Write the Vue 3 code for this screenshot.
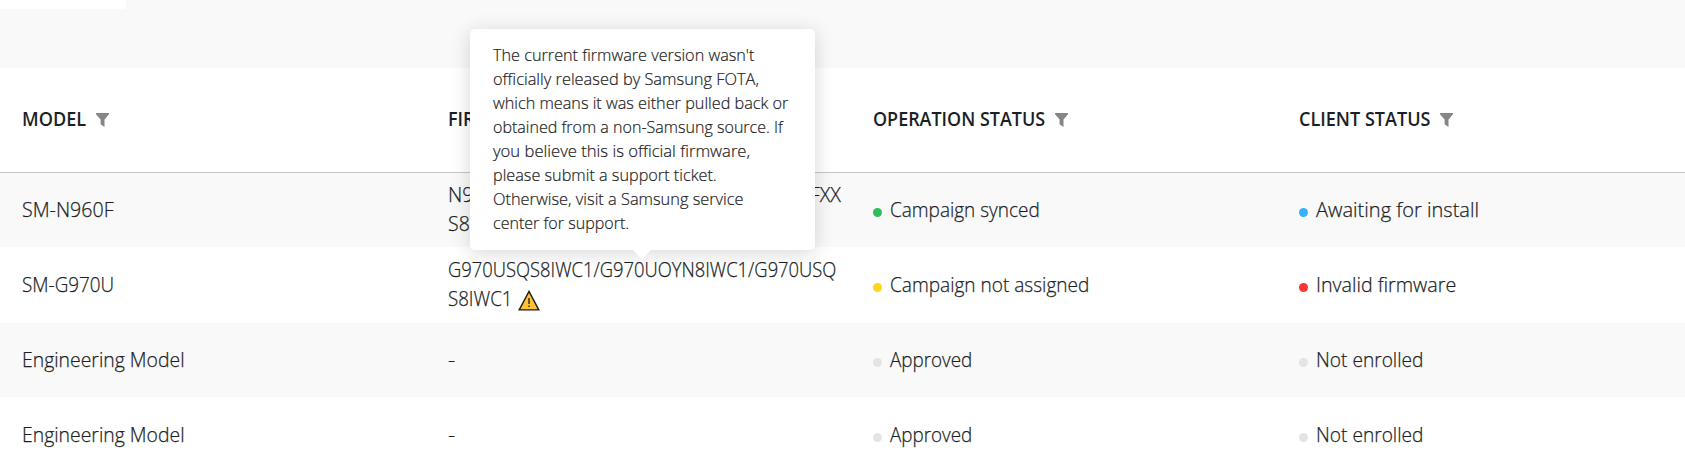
<script setup>
const columns = [
  { label: 'MODEL', width: 64 },
  { label: 'FIRMWARE VERSION', width: 174 },
  { label: 'OPERATION STATUS', width: 172 },
  { label: 'CLIENT STATUS', width: 131.5 },
]

const approved = { text: 'Approved', width: 82.5, tone: 'grey' }
const notEnrolled = { text: 'Not enrolled', width: 107.5, tone: 'grey' }
const engineering = { text: 'Engineering Model', width: 162.5 }
const none = [{ text: '-', width: 7.5 }]

const rows = [
  {
    model: { text: 'SM-N960F', width: 91.5 },
    firmware: [
      { text: 'N960FXXS8FVE1/N960FOXM8FVE1/N960FXX', width: 393 },
      { text: 'S8FVE1', width: 65 },
    ],
    statuses: [
      { text: 'Campaign synced', width: 150, tone: 'green' },
      { text: 'Awaiting for install', width: 163, tone: 'blue' },
    ],
  },
  {
    model: { text: 'SM-G970U', width: 92.5 },
    firmware: [
      { text: 'G970USQS8IWC1/G970UOYN8IWC1/G970USQ', width: 388.5 },
      { text: 'S8IWC1', width: 65 },
    ],
    warning: true,
    statuses: [
      { text: 'Campaign not assigned', width: 199.5, tone: 'yellow' },
      { text: 'Invalid firmware', width: 140.5, tone: 'red' },
    ],
  },
  { model: engineering, firmware: none, statuses: [approved, notEnrolled] },
  { model: engineering, firmware: none, statuses: [approved, notEnrolled] },
]

const tooltip = [
  { text: "The current firmware version wasn't", width: 261.5 },
  { text: 'officially released by Samsung FOTA,', width: 266 },
  { text: 'which means it was either pulled back or', width: 295 },
  { text: 'obtained from a non-Samsung source. If', width: 290 },
  { text: 'you believe this is official firmware,', width: 257 },
  { text: 'please submit a support ticket.', width: 223.5 },
  { text: 'Otherwise, visit a Samsung service', width: 251 },
  { text: 'center for support.', width: 136 },
]

// Condenses a line horizontally so that it takes its intended width.
const vFit = (el, { value }) => {
  const natural = el.offsetWidth
  el.style.transform = `scaleX(${value / natural})`
  el.style.marginRight = `${value - natural}px`
}
</script>

<template>
  <div class="page">
    <div class="toolbar"><div class="tab"></div></div>

    <div class="grid head">
      <div v-for="c in columns" :key="c.label" class="cell">
        <span v-fit="c.width" class="text">{{ c.label }}</span>
        <svg class="filter" width="13" height="14" viewBox="0 0 13 14">
          <path d="M0 0H13V1.3L8.5 6.4V14L4.6 11.2V6.4L0 1.3Z" fill="#868686" />
        </svg>
      </div>
    </div>

    <div v-for="(r, i) in rows" :key="i" class="grid row">
      <div class="cell"><span v-fit="r.model.width" class="text">{{ r.model.text }}</span></div>
      <div class="cell firmware">
        <div v-for="(line, n) in r.firmware" :key="n" class="line">
          <span v-fit="line.width" class="text">{{ line.text }}</span>
          <svg v-if="r.warning && n === 1" class="warn" width="22" height="21" viewBox="0 0 22 21">
            <path d="M11 1.4L20.8 19.9H1.2Z" fill="#ffc233" stroke="#1c1c1c" stroke-width="1.4" />
            <path d="M11 8V14M11 15.5V17" stroke="#1c1c1c" stroke-width="1.3" />
          </svg>
        </div>
      </div>
      <div v-for="s in r.statuses" :key="s.text" class="cell">
        <i class="dot" :class="s.tone"></i>
        <span v-fit="s.width" class="text">{{ s.text }}</span>
      </div>
    </div>

    <div class="tooltip">
      <div v-for="t in tooltip" :key="t.text" class="tip-line">
        <span v-fit="t.width" class="text">{{ t.text }}</span>
      </div>
      <div class="arrow"></div>
    </div>
  </div>
</template>

<style>
body {
  overflow: hidden;
}
</style>

<style scoped>
.page {
  position: relative;
  height: 473px;
  overflow: hidden;
  background: #fff;
  color: #1b1f26;
  font-family: 'Open Sans', Roboto, sans-serif;
}
.toolbar {
  height: 68px;
  background: #f9f9f9;
}
.tab {
  width: 126px;
  height: 9px;
  background: #fff;
  border-bottom-right-radius: 4px;
}
.grid {
  display: grid;
  grid-template-columns: repeat(4, 425.6px);
  box-sizing: border-box;
}
.cell {
  display: flex;
  align-items: center;
  padding-left: 22px;
}
.text {
  display: inline-block;
  flex: none;
  white-space: nowrap;
  transform-origin: 0 50%;
}
.head {
  height: 105px;
  border-bottom: 1px solid #c6c6c6;
  font-size: 19.5px;
  font-weight: 600;
  line-height: 28px;
}
.head .text {
  margin-top: -2px;
}
.filter {
  margin: -1px 0 0 9.5px;
}
.row {
  height: 75px;
  border-bottom: 1px solid #fff;
  font-size: 21px;
  font-weight: 300;
  line-height: 29px;
  -webkit-text-stroke: 0.25px currentColor;
}
.row .text {
  margin-top: -2px;
}
.row:nth-child(odd) {
  background: #f9f9f9;
}
.firmware {
  flex-direction: column;
  align-items: flex-start;
  justify-content: center;
}
.line {
  display: flex;
  height: 29px;
}
.firmware .line .text {
  margin-top: -1px;
}
.warn {
  margin: 4.5px 0 0 5.5px;
}
.dot {
  width: 9px;
  height: 9px;
  margin: 5px 8px 0 0;
  border-radius: 50%;
}
.green { background: #2fbd5b; }
.yellow { background: #ffd41c; }
.blue { background: #37b0ff; }
.red { background: #f93535; }
.grey { background: #e4e4e4; }
.tooltip {
  position: absolute;
  left: 470px;
  top: 29px;
  width: 345px;
  height: 221px;
  box-sizing: border-box;
  padding: 14px 22.5px;
  border-radius: 5px;
  background: #fff;
  box-shadow: 0 3px 20px rgba(0, 0, 0, 0.16);
  color: #222;
  font-size: 17px;
  font-weight: 300;
  line-height: 24px;
  -webkit-text-stroke: 0.2px currentColor;
}
.tip-line {
  height: 23.95px;
}
.arrow {
  position: absolute;
  left: 163px;
  top: 221px;
  border: 9px solid transparent;
  border-top-color: #fff;
  border-bottom: 0;
}
</style>
